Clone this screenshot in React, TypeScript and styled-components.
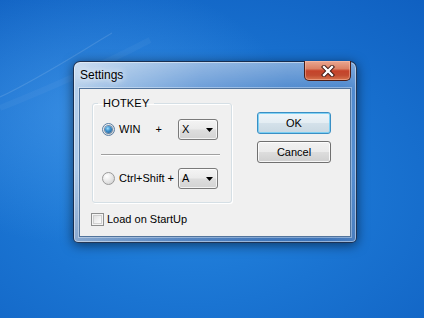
import React from 'react';
import styled, { createGlobalStyle } from 'styled-components';

const Global = createGlobalStyle`
  html, body { margin: 0; padding: 0; }
  body {
    width: 424px; height: 318px; overflow: hidden;
    font-family: "Liberation Sans", Arial, sans-serif;
  }
`;

const Desktop = styled.div`
  position: relative;
  width: 424px;
  height: 318px;
  box-sizing: border-box;
  padding: 61px 0 0 73px;
  background:
    radial-gradient(ellipse 70% 60% at 20% 35%, rgba(90, 170, 245, 0.45) 0%, rgba(90, 170, 245, 0) 70%),
    radial-gradient(ellipse 90% 80% at 45% 60%, #2586e0 0%, #1a74d2 45%, #0f5fc0 100%);
`;

const Wallpaper = styled.svg`
  position: absolute;
  inset: 0;
  z-index: 0;
`;

const Window = styled.div`
  position: relative;
  z-index: 1;
  width: 284px;
  height: 182px;
  box-sizing: border-box;
  display: flex;
  flex-direction: column;
  padding: 0 5px 5px 5px;
  border: 1px solid rgba(18, 38, 70, 0.9);
  border-radius: 7px 7px 5px 5px;
  background:
    linear-gradient(180deg, rgba(255, 255, 255, 0.28) 0%, rgba(255, 255, 255, 0) 16%, rgba(0, 30, 90, 0) 60%, rgba(0, 30, 90, 0.18) 100%),
    linear-gradient(98deg, #b8d1ec 0%, #93b9e3 18%, #6b9dd8 42%, #4f8acf 70%, #4a86cd 88%, #5b93d4 100%);
  box-shadow: 0 2px 12px rgba(0, 0, 0, 0.55), inset 0 0 0 1px rgba(255, 255, 255, 0.45);
`;

const TitleBar = styled.div`
  height: 26px;
  display: flex;
  justify-content: space-between;
  align-items: flex-start;
`;

const Title = styled.span`
  margin: 6px 0 0 1px;
  font-size: 12px;
  line-height: 15px;
  color: #000;
  text-shadow: 0 0 6px rgba(255, 255, 255, 0.95), 0 0 10px rgba(255, 255, 255, 0.8);
`;

const CloseButton = styled.div`
  width: 47px;
  height: 20px;
  margin: -1px 0 0 0;
  box-sizing: border-box;
  border: 1px solid #4b1e18;
  border-top: none;
  border-radius: 0 0 5px 5px;
  display: flex;
  align-items: center;
  justify-content: center;
  background: linear-gradient(180deg, #e9a792 0%, #dc8266 40%, #c5432a 52%, #c24b30 75%, #d8754e 100%);
  box-shadow: inset 0 0 0 1px rgba(255, 200, 180, 0.45);
`;

const Client = styled.div`
  flex: 1;
  display: flex;
  gap: 25px;
  padding: 8px 19px 0 12px;
  background: #f0f0f0;
  border: 1px solid #52749c;
  box-shadow: 0 0 0 1px rgba(255, 255, 255, 0.35);
  font-size: 11px;
  color: #000;
`;

const LeftColumn = styled.div`
  display: flex;
  flex-direction: column;
`;

const Group = styled.fieldset`
  margin: 0;
  width: 140px;
  box-sizing: border-box;
  border: 1px solid #d5dfe5;
  border-radius: 3px;
  padding: 9px 10px 13px 9px;
  box-shadow: inset 1px 1px 0 #ffffff, 1px 1px 0 #ffffff;
`;

const Legend = styled.legend`
  margin-left: -4px;
  padding: 0 5px;
  font-size: 11px;
  line-height: 13px;
  letter-spacing: 0.2px;
`;

const Row = styled.div`
  display: flex;
  align-items: center;
  height: 21px;
`;

const RadioCircle = styled.span<{ $checked?: boolean }>`
  width: 13px;
  height: 13px;
  box-sizing: border-box;
  border-radius: 50%;
  border: 1px solid ${p => (p.$checked ? '#5a7ea3' : '#9a9a9a')};
  background: radial-gradient(circle at 35% 30%, #ffffff 0%, #e4e4e4 55%, #c9c9c9 100%);
  display: flex;
  align-items: center;
  justify-content: center;
  flex: none;
`;

const RadioDot = styled.span`
  width: 7px;
  height: 7px;
  border-radius: 50%;
  background: radial-gradient(circle at 40% 35%, #9fe0ff 0%, #3f93cf 40%, #174f86 100%);
  box-shadow: 0 0 0 1px rgba(24, 70, 120, 0.6);
`;

const RowLabel = styled.span`
  width: 59px;
  margin-left: 4px;
  flex: none;
  white-space: nowrap;
  display: flex;
  align-items: center;
  line-height: 13px;
`;

const Plus = styled.span`
  margin-left: 15px;
`;

const Combo = styled.div`
  width: 40px;
  height: 21px;
  box-sizing: border-box;
  border: 1px solid #7a7a7a;
  border-radius: 3px;
  display: flex;
  align-items: center;
  justify-content: space-between;
  padding: 0 4px 0 3px;
  background: linear-gradient(180deg, #f4f4f4 0%, #ebebeb 48%, #dddddd 52%, #d3d3d3 100%);
  box-shadow: inset 0 0 0 1px rgba(255, 255, 255, 0.7);
`;

const ComboValue = styled.span`
  line-height: 13px;
`;

const Separator = styled.div`
  height: 1px;
  margin: 14px 1px 13px -1px;
  background: #a0a0a0;
  box-shadow: 0 1px 0 #ffffff;
`;

const CheckRow = styled.label`
  display: flex;
  align-items: center;
  margin: 10px 0 0 -1px;
  line-height: 13px;
`;

const CheckBox = styled.span`
  width: 13px;
  height: 13px;
  box-sizing: border-box;
  border: 1px solid #8e8f8f;
  background: linear-gradient(135deg, #d8d8d8 0%, #f4f4f4 60%, #ffffff 100%);
  box-shadow: inset 0 0 0 1px #f4f4f4, inset 0 0 0 2px #d0d0d0;
  margin-right: 3px;
  flex: none;
`;

const RightColumn = styled.div`
  display: flex;
  flex-direction: column;
  gap: 7px;
  margin-top: 15px;
`;

const Button = styled.div<{ $default?: boolean }>`
  width: 74px;
  height: 22px;
  box-sizing: border-box;
  display: flex;
  align-items: center;
  justify-content: center;
  font-size: 11px;
  border-radius: 3px;
  border: 1px solid ${p => (p.$default ? '#3a8fc4' : '#707070')};
  background: ${p =>
    p.$default
      ? 'linear-gradient(180deg, #eef5f9 0%, #e4edf3 48%, #d4e1ea 52%, #c9d8e2 100%)'
      : 'linear-gradient(180deg, #f2f2f2 0%, #ebebeb 48%, #dddddd 52%, #cfcfcf 100%)'};
  box-shadow: inset 0 0 0 1px ${p => (p.$default ? 'rgba(110, 205, 245, 0.85)' : 'rgba(255, 255, 255, 0.8)')};
`;

export default function App() {
  return (
    <>
      <Global />
      <Desktop>
        <Wallpaper width="424" height="318" viewBox="0 0 424 318">
          <path d="M0 97 C40 78 75 55 112 33" stroke="rgba(255,255,255,0.12)" strokeWidth="1.2" fill="none" />
          <path d="M0 108 C50 88 100 66 150 40" stroke="rgba(255,255,255,0.04)" strokeWidth="6" fill="none" />
        </Wallpaper>
        <Window>
          <TitleBar>
            <Title>Settings</Title>
            <CloseButton>
              <svg width="14" height="12" viewBox="0 0 14 12">
                <path d="M3 2 L11 10 M11 2 L3 10" stroke="#3a1510" strokeWidth="4.2" strokeLinecap="square" />
                <path d="M3 2 L11 10 M11 2 L3 10" stroke="#ffffff" strokeWidth="2.4" strokeLinecap="square" />
              </svg>
            </CloseButton>
          </TitleBar>
          <Client>
            <LeftColumn>
              <Group>
                <Legend>HOTKEY</Legend>
                <Row>
                  <RadioCircle $checked>
                    <RadioDot />
                  </RadioCircle>
                  <RowLabel>
                    WIN<Plus>+</Plus>
                  </RowLabel>
                  <Combo>
                    <ComboValue>X</ComboValue>
                    <svg width="7" height="4" viewBox="0 0 7 4">
                      <path d="M0 0 H7 L3.5 4 Z" fill="#000" />
                    </svg>
                  </Combo>
                </Row>
                <Separator />
                <Row>
                  <RadioCircle />
                  <RowLabel>Ctrl+Shift +</RowLabel>
                  <Combo>
                    <ComboValue>A</ComboValue>
                    <svg width="7" height="4" viewBox="0 0 7 4">
                      <path d="M0 0 H7 L3.5 4 Z" fill="#000" />
                    </svg>
                  </Combo>
                </Row>
              </Group>
              <CheckRow>
                <CheckBox />
                Load on StartUp
              </CheckRow>
            </LeftColumn>
            <RightColumn>
              <Button $default>OK</Button>
              <Button>Cancel</Button>
            </RightColumn>
          </Client>
        </Window>
      </Desktop>
    </>
  );
}
